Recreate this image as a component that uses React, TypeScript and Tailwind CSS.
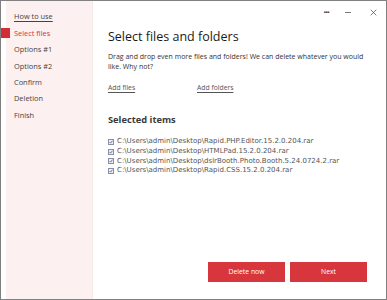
import { useState } from 'react';

const steps = ['How to use', 'Select files', 'Options #1', 'Options #2', 'Confirm', 'Deletion', 'Finish'];

const items = [
  'C:\\Users\\admin\\Desktop\\Rapid.PHP.Editor.15.2.0.204.rar',
  'C:\\Users\\admin\\Desktop\\HTMLPad.15.2.0.204.rar',
  'C:\\Users\\admin\\Desktop\\dslrBooth.Photo.Booth.5.24.0724.2.rar',
  'C:\\Users\\admin\\Desktop\\Rapid.CSS.15.2.0.204.rar',
];

function CheckBox() {
  return (
    <span className="w-[6px] h-[6px] border border-[#8a8fa8] bg-[#eef0f8] flex items-center justify-center shrink-0">
      <svg viewBox="0 0 8 8" className="w-[6px] h-[6px]">
        <path d="M1.2 4.2 L3.2 6.2 L7 1.4" fill="none" stroke="#3a3f6a" strokeWidth="1.4" />
      </svg>
    </span>
  );
}

export default function App() {
  const [active] = useState(1);

  return (
    <div
      className="w-[387px] h-[300px] border border-[#808080] flex bg-white overflow-hidden"
      style={{ fontFamily: '"Open Sans", "Noto Sans", sans-serif' }}
    >
      {/* Sidebar */}
      <div className="w-[92px] shrink-0 h-full border-l-[5px] border-white bg-[#fdf0f0] border-r border-r-[#f8e8e8] pt-[8px] flex flex-col">
        {steps.map((s, i) => (
          <div key={s} className="relative h-[16.4px] flex items-center pl-[8px]">
            {i === active && <span className="absolute left-[-5px] top-[3px] w-[9px] h-[10px] bg-[#d42c34]" />}
            <span
              className={`text-[7.4px] leading-none ${
                i === active ? 'text-[#d2343b]' : 'text-[#444]'
              } ${i === 0 ? 'underline underline-offset-2' : ''}`}
            >
              {s}
            </span>
          </div>
        ))}
      </div>

      {/* Main */}
      <div className="flex-1 flex flex-col">
        <div className="flex justify-end items-center h-[22px] text-[#444]">
          <span className="text-[6px] leading-none tracking-[-0.5px] font-bold mr-[16px]">•••</span>
          <span className="w-[6px] h-px bg-[#777] mr-[19px]" />
          <svg viewBox="0 0 10 10" className="w-[7px] h-[7px] mr-[9px]">
            <path d="M1 1 L9 9 M9 1 L1 9" stroke="#555" strokeWidth="1.1" />
          </svg>
        </div>

        <div className="pl-[15px] flex flex-col">
          <h1 className="text-[12.5px] leading-[16px] text-[#1a1a1a] mt-[6px]">Select files and folders</h1>
          <p className="w-[258px] text-[7px] leading-[9.5px] text-[#333] mt-[7px]">
            Drag and drop even more files and folders! We can delete whatever you would like. Why not?
          </p>
          <div className="flex mt-[12px] text-[6.8px] leading-[10px] text-[#555]">
            <span className="w-[89px]">
              <span className="underline underline-offset-2">Add files</span>
            </span>
            <span className="underline underline-offset-2">Add folders</span>
          </div>

          <h2 className="text-[9.3px] font-bold text-[#3a3a3a] mt-[21px] leading-[12px]">Selected items</h2>
          <div className="flex flex-col mt-[11px]">
            {items.map((it) => (
              <div key={it} className="flex items-center gap-[3px] h-[9.7px]">
                <CheckBox />
                <span
                  className="text-[7px] leading-none text-[#555]"
                  style={{ fontFamily: '"DejaVu Sans", Verdana, sans-serif' }}
                >
                  {it}
                </span>
              </div>
            ))}
          </div>
        </div>

        <div className="mt-auto mb-[17px] flex justify-end gap-[5px] pr-[19px]">
          <button className="w-[77px] h-[20px] bg-[#d7363d] text-white text-[6.8px]">Delete now</button>
          <button className="w-[77px] h-[20px] bg-[#d7363d] text-white text-[6.8px]">Next</button>
        </div>
      </div>
    </div>
  );
}
